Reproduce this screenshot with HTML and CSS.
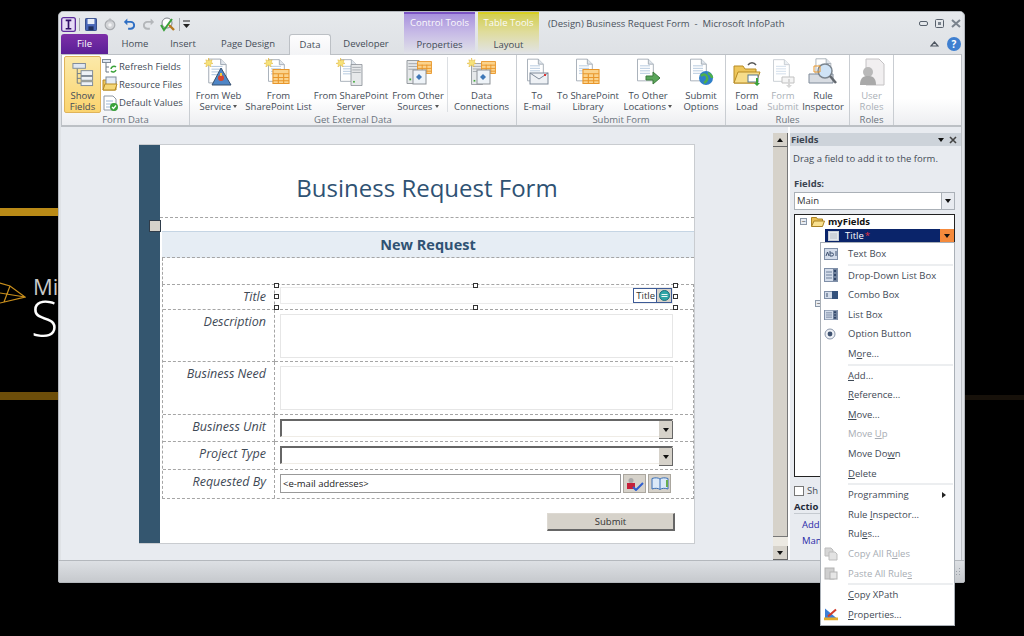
FILE: index.html
```html
<!DOCTYPE html>
<html lang="en">
<head>
<meta charset="utf-8">
<title>Microsoft InfoPath</title>
<link rel="stylesheet" href="styles.css">
</head>
<body>
<svg class="defs" width="0" height="0">
  <defs>
    <symbol id="doc" viewBox="0 0 24 28"><path d="M3 1h13l6 6v20H3z" fill="#fff" stroke="#9aa3ae"/><path d="M16 1v6h6" fill="#dfe5ec" stroke="#9aa3ae"/><path d="M6 9h12M6 12h12M6 15h12M6 18h12" stroke="#a9c0da"/></symbol>
    <symbol id="star" viewBox="0 0 10 10"><path d="M5 0l1 3 3-1-1 3 2 1-3 1 1 3-3-2-3 2 1-3-3-1 3-1-1-3 3 1z" fill="#f6e27a" stroke="#e0b030" stroke-width=".5"/></symbol>
    <symbol id="grid" viewBox="0 0 16 14"><path d="M.5.5h15v13H.5z" fill="#fbd38c" stroke="#e8962a"/><path d="M.5 4.500h15M.5 8h15M.5 11h15M5.500 4v10M10.500 4v10" stroke="#e8962a"/></symbol>
    <symbol id="server" viewBox="0 0 14 26"><path d="M.5.500h13v25H.5z" fill="#e6e8ea" stroke="#8d9298"/><path d="M2 4h10M2 7h10M2 10h10" stroke="#9ea3a9"/><rect x="3" y="20" width="2" height="2" fill="#41a83c"/></symbol>
    <symbol id="mini" viewBox="0 0 16 16"><path d="M2 1h9l3 3v11H2z" fill="#fff" stroke="#8e98a4"/><path d="M4 6h7M4 9h7M4 12h7" stroke="#9db6d4"/></symbol>
    <symbol id="menu-list" viewBox="0 0 14 14"><rect x=".5" y=".5" width="13" height="13" fill="#d3dcea" stroke="#7f8fa8"/><rect x="9" y="1" width="4" height="12" fill="#6f819c"/><path d="M10 3h2M10 7h2M10 11h2" stroke="#1f3558" stroke-width="1.500"/><path d="M2 4h6M2 7h6M2 10h6" stroke="#6f819c"/></symbol>
  </defs>
</svg>

<div class="desktop-art" aria-hidden="true">
  <div class="stripe stripe-top"></div>
  <div class="stripe stripe-bottom"></div>
  <div class="stripe stripe-right"></div>
  <svg class="art-mark" width="26" height="26" viewBox="0 0 26 26"><path d="M0 3l10 3 15 11L0 23M10 6L4 22M0 13l25 4" fill="none" stroke="#c98f1c" stroke-width="1.200"/></svg>
  <span class="art-mi">Mi</span>
  <span class="art-s">S</span>
</div>

<main class="window">
  <header class="top">
    <div class="qat">
      <svg class="q-app" width="15" height="15" viewBox="0 0 16 16"><rect x=".7" y=".7" width="14.600" height="14.600" rx="2" fill="#e6dcf5" stroke="#5d2c9c" stroke-width="1.400"/><path d="M5 3.500h6M5 12.500h6M8 3.500v9" stroke="#32106a" stroke-width="1.800"/></svg>
      <span class="qat-sep q-sep1"></span>
      <svg class="q-save" width="12" height="13" viewBox="0 0 14 14" preserveAspectRatio="none"><rect x=".5" y=".5" width="13" height="13" rx="1" fill="#4a68b8" stroke="#27407f"/><rect x="3" y="1" width="8" height="5.500" fill="#e8eef8"/><rect x="4" y="9" width="6" height="4" fill="#1f2f5c"/></svg>
      <svg class="q-pub" width="14" height="16" viewBox="0 0 16 16"><circle cx="8" cy="9" r="5.500" fill="#d3d5d8" stroke="#a8abaf" stroke-width="1.400"/><path d="M8 1l4 4H4z" fill="#b9bcc0"/><circle cx="8" cy="9" r="2" fill="#f2f3f4"/></svg>
      <svg class="q-undo" width="12" height="13" viewBox="0 0 14 14"><path d="M4 4h5a4 4 0 0 1 0 8H6" fill="none" stroke="#2f6fc4" stroke-width="2.200"/><path d="M5 0v8L1 4z" fill="#2f6fc4"/></svg>
      <svg class="q-redo" width="12" height="13" viewBox="0 0 14 14"><path d="M10 4H5a4 4 0 0 0 0 8h3" fill="none" stroke="#b4b7ba" stroke-width="2.200"/><path d="M9 0v8l4-4z" fill="#b4b7ba"/></svg>
      <svg class="q-check" width="16" height="16" viewBox="0 0 16 16"><circle cx="7" cy="7" r="5" fill="#fff" stroke="#7b8087"/><path d="M1 9l3 5 8-11" fill="none" stroke="#3aa23a" stroke-width="2"/><path d="M9 9l5 5" stroke="#b7791f" stroke-width="2.400"/></svg>
      <span class="qat-sep q-sep2"></span>
      <svg class="q-more" width="7" height="8" viewBox="0 0 7 8"><path d="M0 1h7" stroke="#222"/><path d="M0 4h7L3.500 8z" fill="#222"/></svg>
    </div>
    <div class="ctx ctx-control">
      <div class="ctx-title">Control Tools</div>
      <div class="ctx-tab">Properties</div>
    </div>
    <div class="ctx ctx-table">
      <div class="ctx-title">Table Tools</div>
      <div class="ctx-tab">Layout</div>
    </div>
    <div class="caption">
      <span class="caption-text">(Design) Business Request Form&nbsp; -&nbsp; Microsoft InfoPath</span>
      <span class="win-btns">
        <svg width="9" height="5" viewBox="0 0 9 5"><rect x=".5" y=".5" width="8" height="4" rx="1.500" fill="none" stroke="#58616c"/></svg>
        <svg width="9" height="9" viewBox="0 0 9 9"><rect x=".5" y=".5" width="8" height="8" rx="1" fill="none" stroke="#58616c"/><rect x="3" y="3" width="3" height="3" fill="#7a838d"/></svg>
        <svg width="10" height="9" viewBox="0 0 10 9"><path d="M1 1l8 7M9 1L1 8" stroke="#7a838d" stroke-width="2"/></svg>
      </span>
    </div>
    <nav class="tabs">
      <span class="tab tab-file">File</span>
      <span class="tab tab-home">Home</span>
      <span class="tab tab-insert">Insert</span>
      <span class="tab tab-design">Page Design</span>
      <span class="tab tab-active">Data</span>
      <span class="tab tab-dev">Developer</span>
    </nav>
    <div class="help-row">
      <svg width="9" height="6" viewBox="0 0 9 6"><path d="M1 5l3.500-4L8 5z" fill="none" stroke="#4d5560" stroke-width="1.200"/></svg>
      <span class="help">?</span>
    </div>
  </header>

  <section class="ribbon">
    <div class="group group-form">
      <div class="group-body">
        <div class="show-fields">
          <svg width="22" height="25" viewBox="0 0 22 25"><rect x=".5" y=".5" width="13" height="5" fill="#dfe7f2" stroke="#7e8a99"/><path d="M5 6v15M5 11h4M5 16h4M5 21h4" stroke="#6b7785" fill="none"/><rect x="9" y="8" width="12" height="5" fill="#eef2f7" stroke="#7e8a99"/><rect x="9" y="14" width="12" height="4" fill="#eef2f7" stroke="#7e8a99"/><rect x="9" y="19.500" width="12" height="4" fill="#eef2f7" stroke="#7e8a99"/></svg>
          <span class="btn-label">Show<br>Fields</span>
        </div>
        <div class="small-col">
          <div class="small-btn">
            <svg width="16" height="16" viewBox="0 0 16 16"><rect x=".5" y="1.500" width="8" height="3" fill="#dfe7f2" stroke="#7e8a99"/><path d="M4 5v9h3M4 9h3" fill="none" stroke="#6b7785"/><path d="M9 11a3 3 0 0 1 5-2M14 12a3 3 0 0 1-5 1" fill="none" stroke="#3aa23a" stroke-width="1.500"/></svg>
            <span>Refresh Fields</span>
          </div>
          <div class="small-btn">
            <svg width="16" height="16" viewBox="0 0 16 16"><path d="M1 4h6l1 1h6v9H1z" fill="#eec65b" stroke="#b78b24"/><rect x="4" y="1" width="10" height="8" fill="#e6edf6" stroke="#7e8a99"/><path d="M1 14l2-6h12l-2 6z" fill="#f5d777" stroke="#b78b24"/></svg>
            <span>Resource Files</span>
          </div>
          <div class="small-btn">
            <svg width="16" height="16"><use href="#mini"/><circle cx="12" cy="12" r="4" fill="#3aa23a"/><path d="M10 12l1.500 1.500L14 10.500" stroke="#fff" fill="none" stroke-width="1.200"/></svg>
            <span>Default Values</span>
          </div>
        </div>
      </div>
      <div class="group-label">Form Data</div>
    </div>

    <div class="group group-external">
      <div class="group-body">
        <div class="rb w-web">
          <svg class="rb-icon" width="30" height="30"><use href="#doc" x="2" width="22" height="26"/><use href="#star" x="0" y="0" width="9" height="9"/><path d="M17 10l10 17H8z" fill="#4f86c6" stroke="#37506f"/><circle cx="17" cy="20" r="3" fill="#d8452f"/><path d="M17 15v3" stroke="#f3c33c" stroke-width="2"/></svg>
          <span class="btn-label">From Web<br>Service <i class="caret"></i></span>
        </div>
        <div class="rb w-list">
          <svg class="rb-icon" width="30" height="30"><use href="#doc" x="2" width="20" height="25"/><use href="#star" x="0" y="0" width="9" height="9"/><use href="#grid" x="8" y="11" width="18" height="15"/></svg>
          <span class="btn-label">From<br>SharePoint List</span>
        </div>
        <div class="rb w-server">
          <svg class="rb-icon" width="30" height="30"><use href="#doc" x="2" width="20" height="25"/><use href="#star" x="0" y="0" width="9" height="9"/><use href="#server" x="14" y="6" width="13" height="22"/></svg>
          <span class="btn-label">From SharePoint<br>Server</span>
        </div>
        <div class="rb w-other">
          <svg class="rb-icon" width="30" height="30"><use href="#server" x="3" y="2" width="14" height="24"/><use href="#grid" x="14" y="3" width="15" height="13"/><rect x="10" y="12" width="13" height="14" fill="#eef3f8" stroke="#8d9298"/><path d="M13 19l3-3 3 3-3 3z" fill="#3f78b8"/></svg>
          <span class="btn-label">From Other<br>Sources <i class="caret"></i></span>
        </div>
        <i class="rb-sep"></i>
        <div class="rb w-conn">
          <svg class="rb-icon" width="30" height="30"><use href="#server" x="3" y="5" width="14" height="22"/><use href="#star" x="0" y="0" width="9" height="9"/><use href="#grid" x="14" y="3" width="15" height="13"/><rect x="10" y="12" width="13" height="14" fill="#eef3f8" stroke="#8d9298"/><path d="M13 19l3-3 3 3-3 3z" fill="#3f78b8"/></svg>
          <span class="btn-label">Data<br>Connections</span>
        </div>
      </div>
      <div class="group-label">Get External Data</div>
    </div>

    <div class="group group-submit">
      <div class="group-body">
        <div class="rb w-mail">
          <svg class="rb-icon" width="30" height="30"><use href="#doc" x="3" width="20" height="24"/><rect x="8" y="15" width="18" height="11" fill="#eef1f5" stroke="#7e8a99"/><path d="M8 15l9 6 9-6" fill="none" stroke="#7e8a99"/><rect x="22" y="16" width="2" height="2" fill="#d33"/></svg>
          <span class="btn-label">To<br>E-mail</span>
        </div>
        <div class="rb w-lib">
          <svg class="rb-icon" width="30" height="30"><use href="#doc" x="1" width="20" height="24"/><use href="#grid" x="9" y="11" width="18" height="15"/></svg>
          <span class="btn-label">To SharePoint<br>Library</span>
        </div>
        <div class="rb w-loc">
          <svg class="rb-icon" width="30" height="30"><use href="#doc" x="2" width="20" height="24"/><path d="M13 18h7v-4l7 6-7 6v-4h-7z" fill="#5aa65a" stroke="#3c7a3c"/></svg>
          <span class="btn-label">To Other<br>Locations <i class="caret"></i></span>
        </div>
        <div class="rb w-opt">
          <svg class="rb-icon" width="30" height="30"><use href="#doc" x="2" width="20" height="24"/><circle cx="20" cy="20" r="7" fill="#2f7fc9"/><path d="M15 18c3-3 5-1 6 1s-1 5-3 6M22 15c2 1 4 3 4 5" fill="none" stroke="#4fb04a" stroke-width="2.500"/></svg>
          <span class="btn-label">Submit<br>Options</span>
        </div>
      </div>
      <div class="group-label">Submit Form</div>
    </div>

    <div class="group group-rules">
      <div class="group-body">
        <div class="rb w-load">
          <svg class="rb-icon" width="30" height="30"><path d="M2 8h9l2 3h11v14H2z" fill="#eec65b" stroke="#b78b24"/><path d="M2 25l4-11h22l-4 11z" fill="#f7dd8a" stroke="#b78b24"/><path d="M16 7c2-3 6-3 8 0" fill="none" stroke="#555" stroke-width="1.400"/><rect x="16" y="17" width="10" height="7" fill="#fff" stroke="#56798f"/><path d="M24 20v5h-2l3 3 3-3h-2v-5z" fill="#3aa23a"/></svg>
          <span class="btn-label">Form<br>Load</span>
        </div>
        <div class="rb w-fsub disabled">
          <svg class="rb-icon dim" width="30" height="30"><use href="#doc" x="3" width="20" height="25"/><path d="M14 19h12v6H14z" fill="#eee" stroke="#999"/><path d="M20 21v6h-2l3 3 3-3h-2v-6z" fill="#bbb"/></svg>
          <span class="btn-label">Form<br>Submit</span>
        </div>
        <div class="rb w-insp">
          <svg class="rb-icon" width="30" height="30"><use href="#doc" x="5" width="20" height="22"/><path d="M1 16h24v9H1z" fill="#d8dce2" stroke="#7e8a99"/><circle cx="17" cy="13" r="7" fill="#cfe3f6" stroke="#7b858f" stroke-width="1.500"/><path d="M22 18l6 7" stroke="#62676d" stroke-width="2.500"/><path d="M6 8h6v6H6z" fill="none" stroke="#e8962a"/></svg>
          <span class="btn-label">Rule<br>Inspector</span>
        </div>
      </div>
      <div class="group-label">Rules</div>
    </div>

    <div class="group group-roles">
      <div class="group-body">
        <div class="rb w-roles disabled">
          <svg class="rb-icon" width="30" height="30"><path d="M9 1h13l5 5v21H9z" fill="#f1eff0" stroke="#c4c2c4"/><circle cx="11" cy="14" r="5" fill="#b9b9b9"/><path d="M3 27c0-8 4-9 8-9s8 1 8 9z" fill="#a9a9a9"/></svg>
          <span class="btn-label">User<br>Roles</span>
        </div>
      </div>
      <div class="group-label">Roles</div>
    </div>
  </section>

  <section class="workspace">
    <div class="canvas">
      <article class="form">
        <div class="form-strip"></div>
        <div class="form-page">
          <span class="table-handle"></span>
          <h1 class="form-title">Business Request Form</h1>
          <div class="form-gap"></div>
          <h2 class="banner">New Request</h2>
          <div class="banner-gap"></div>
          <div class="fields-table">
            <div class="cell label h-title">Title</div>
            <div class="cell value h-title">
              <div class="input-title">
                <span class="title-tag"><span class="tag-name">Title</span><span class="tag-btn"><svg width="11" height="11" viewBox="0 0 11 11"><circle cx="5.500" cy="5.500" r="5" fill="#2fa6a6" stroke="#1c6f80"/><path d="M2.500 4.500h6M2.500 6.500h6" stroke="#e8f6f6"/></svg></span></span>
              </div>
              <i class="sel s-tl"></i><i class="sel s-tc"></i><i class="sel s-tr"></i>
              <i class="sel s-ml"></i><i class="sel s-mr"></i>
              <i class="sel s-bl"></i><i class="sel s-bc"></i><i class="sel s-br"></i>
            </div>
            <div class="cell label h-area">Description</div>
            <div class="cell value h-area"><div class="area"></div></div>
            <div class="cell label h-area2">Business Need</div>
            <div class="cell value h-area2"><div class="area"></div></div>
            <div class="cell label h-drop">Business Unit</div>
            <div class="cell value h-drop"><div class="dropdown"><span class="drop-arrow"><i class="arrow"></i></span></div></div>
            <div class="cell label h-drop2">Project Type</div>
            <div class="cell value h-drop2"><div class="dropdown"><span class="drop-arrow"><i class="arrow"></i></span></div></div>
            <div class="cell label h-drop2">Requested By</div>
            <div class="cell value h-drop2 people">
              <div class="people-input">&lt;e-mail addresses&gt;</div>
              <span class="people-btn"><svg width="18" height="14" viewBox="0 0 18 14"><circle cx="5" cy="3.500" r="2.500" fill="#a8a8a8"/><rect x="1" y="6" width="8" height="6" fill="#c5203a"/><path d="M7 10l3 3 7-7" fill="none" stroke="#2f5fd0" stroke-width="2"/></svg></span>
              <span class="people-btn"><svg width="18" height="13" viewBox="0 0 18 13"><path d="M9 2C7 .5 4 .5 1 1.500V12c3-1 6-1 8 .5 2-1.500 5-1.500 8-.5V1.500C14 .5 11 .5 9 2z" fill="#dbe9f8" stroke="#3b6fb5"/><path d="M9 2v10" stroke="#3b6fb5"/><rect x="15" y="3" width="2" height="7" fill="#6aae4e"/></svg></span>
            </div>
          </div>
          <div class="submit-row"><span class="submit">Submit</span></div>
        </div>
      </article>
    </div>

    <div class="scrollbar">
      <span class="sb-btn"><i class="arrow up"></i></span>
      <span class="sb-thumb"></span>
      <span class="sb-track"></span>
      <span class="sb-btn"><i class="arrow"></i></span>
    </div>

    <aside class="pane">
      <div class="pane-head">
        <span>Fields</span>
        <span class="pane-ctrls"><i class="arrow"></i><svg width="8" height="8" viewBox="0 0 8 8"><path d="M1 1l6 6M7 1L1 7" stroke="#444" stroke-width="1.600"/></svg></span>
      </div>
      <p class="pane-hint">Drag a field to add it to the form.</p>
      <p class="pane-label">Fields:</p>
      <div class="pane-select"><span>Main</span><span class="ps-btn"><i class="arrow"></i></span></div>
      <div class="tree">
        <div class="tree-root">
          <span class="expander">−</span>
          <svg width="14" height="11" viewBox="0 0 14 11"><path d="M.5 1.500h5l1 1.500h5v7H.5z" fill="#e9bf52" stroke="#a98125"/><path d="M.5 10.500l2.500-5.500h10.500l-2 5.500z" fill="#f9e08f" stroke="#a98125"/></svg>
          <b>myFields</b>
        </div>
        <div class="tree-sel">
          <svg width="11" height="10" viewBox="0 0 11 10"><rect x=".5" y=".5" width="10" height="9" fill="#e4e8ee" stroke="#c8ced6"/><path d="M2 3h7M2 5h7M2 7h7" stroke="#b6bdc7"/></svg>
          <span class="ts-name">Title</span><span class="ts-star">*</span>
          <span class="ts-drop"><i class="arrow"></i></span>
        </div>
        <span class="expander tree-peek">−</span>
      </div>
      <div class="pane-check"><span class="box"></span><span>Sh</span></div>
      <div class="pane-actions">Actio</div>
      <a class="pane-link link-add">Add</a>
      <a class="pane-link">Man</a>
    </aside>
  </section>
  <footer class="status">
    <svg width="10" height="10" viewBox="0 0 10 10"><path d="M8 1h1v1H8zM8 4h1v1H8zM5 4h1v1H5zM8 7h1v1H8zM5 7h1v1H5zM2 7h1v1H2z" fill="#9aa0a7"/></svg>
  </footer>
</main>

<div class="menu">
  <div class="mi"><svg width="14" height="12" viewBox="0 0 14 12"><rect x=".5" y=".5" width="13" height="11" fill="#d3dcea" stroke="#7f8fa8"/><path d="M2 8l1.500-4 1.500 4M6 3v5h2a1.500 1.500 0 0 0 0-3H6M12 3v5" fill="none" stroke="#3f5270"/></svg><span>Text Box</span></div>
  <div class="ms"></div>
  <div class="mi"><svg width="14" height="14"><use href="#menu-list"/></svg><span>Drop-Down List Box</span></div>
  <div class="mi"><svg width="14" height="8" viewBox="0 0 14 8"><rect x=".5" y=".5" width="13" height="7" fill="#d3dcea" stroke="#7f8fa8"/><rect x="8" y="0" width="6" height="8" fill="#33517c"/><path d="M3 2v4" stroke="#3f5270"/></svg><span>Combo Box</span></div>
  <div class="mi"><svg width="14" height="10" viewBox="0 0 14 14" preserveAspectRatio="none"><use href="#menu-list"/></svg><span>List Box</span></div>
  <div class="mi"><svg width="12" height="12" viewBox="0 0 12 12"><circle cx="6" cy="6" r="5" fill="#eef1f6" stroke="#8b97ab"/><circle cx="6" cy="6" r="2.400" fill="#3f5270"/></svg><span>Option Button</span></div>
  <div class="mi"><span>M<u>o</u>re...</span></div>
  <div class="ms"></div>
  <div class="mi"><span><u>A</u>dd...</span></div>
  <div class="mi"><span><u>R</u>eference...</span></div>
  <div class="mi"><span><u>M</u>ove...</span></div>
  <div class="mi off"><span>Move <u>U</u>p</span></div>
  <div class="mi"><span>Move Do<u>w</u>n</span></div>
  <div class="mi"><span><u>D</u>elete</span></div>
  <div class="ms"></div>
  <div class="mi"><span>Pro<u>g</u>ramming</span><i class="sub"></i></div>
  <div class="mi"><span>Rule <u>I</u>nspector...</span></div>
  <div class="mi"><span>Rul<u>e</u>s...</span></div>
  <div class="mi off"><svg width="14" height="14" viewBox="0 0 14 14"><path d="M1 1h6l2 2v6H1z" fill="#d6d6d6" stroke="#bdbdbd"/><path d="M5 5h6l2 2v6H5z" fill="#e3e3e3" stroke="#bdbdbd"/></svg><span>Copy All R<u>u</u>les</span></div>
  <div class="mi off"><svg width="14" height="14" viewBox="0 0 14 14"><rect x="1" y="2" width="9" height="11" fill="#cfcfcf" stroke="#b3b3b3"/><rect x="6" y="6" width="7" height="7" fill="#e6e6e6" stroke="#b3b3b3"/></svg><span>Paste All Rule<u>s</u></span></div>
  <div class="ms"></div>
  <div class="mi"><span><u>C</u>opy XPath</span></div>
  <div class="mi"><svg width="14" height="13" viewBox="0 0 14 13"><path d="M1 1v10h12L1 1z" fill="#3d7fd8"/><path d="M4 9l8-7" stroke="#d23b2a" stroke-width="2"/><rect x="0" y="10" width="14" height="3" fill="#e3ad2c"/></svg><span><u>P</u>roperties...</span></div>
</div>
</body>
</html>
```

FILE: styles.css
```css
* { box-sizing: border-box; }
html, body { margin: 0; height: 100%; }
body {
  position: relative;
  width: 1024px;
  height: 636px;
  overflow: hidden;
  background: #000;
  font-family: "Open Sans", "Noto Sans", sans-serif;
  font-size: 9px;
  color: #444c57;
}
.defs { position: absolute; }
p, h1, h2 { margin: 0; }

/* desktop wallpaper behind the window */
.desktop-art { position: absolute; inset: 0; }
.stripe { position: absolute; }
.stripe-top { left: 0; top: 208px; width: 58px; height: 8px; background: #b98a17; }
.stripe-bottom { left: 0; top: 392px; width: 58px; height: 8px; background: #6d4e0a; }
.stripe-right { left: 965px; top: 395px; width: 59px; height: 5px; background: #17110a; }
.art-mark { position: absolute; left: 0; top: 280px; }
.art-mi { position: absolute; left: 33px; top: 276px; font: 22px/20px "Open Sans", sans-serif; color: #c9c9c9; }
.art-s { position: absolute; left: 31px; top: 300px; font: 300 50px/36px "Open Sans", sans-serif; color: #fff; }

/* window */
.window {
  position: absolute;
  left: 58px;
  top: 11px;
  width: 907px;
  height: 572px;
  display: flex;
  flex-direction: column;
  padding: 0 2px;
  border-radius: 5px 5px 2px 2px;
  background: #dfe2e6;
  border: 1px solid #b4b8bd;
}

.top {
  display: grid;
  grid-template-columns: 343px 71px 3px 61px 1fr;
  grid-template-rows: 22px 20px;
  background: linear-gradient(#e6e9ec, #dee1e5);
}
.qat { grid-column: 1; grid-row: 1; display: flex; align-items: center; padding: 2px 0 0 0; }
.q-sep1 { margin-left: 3px; }
.q-save { margin-left: 5px; }
.q-pub { margin-left: 6px; }
.q-undo { margin-left: 6px; }
.q-redo { margin-left: 8px; }
.q-check { margin-left: 5px; }
.q-sep2 { margin-left: 3px; }
.q-more { margin-left: 3px; }
.qat-sep { width: 1px; height: 13px; background: #a7abb0; }
.ctx { grid-row: 1 / 3; display: flex; flex-direction: column; border-top: 2px solid; text-align: center; }
.ctx-control { grid-column: 2; border-color: #7b54c4; background: linear-gradient(#a892de, #c6b9e6 45%, #e1e3e8); }
.ctx-table { grid-column: 4; border-color: #d8cf22; background: linear-gradient(#d3cf4e, #dfdc9c 45%, #e1e3e8); }
.ctx-title { height: 20px; line-height: 18px; font-size: 9.5px; color: #fbfbfb; }
.ctx-tab { height: 20px; line-height: 21px; font-size: 9.5px; color: #444c57; }
.caption { grid-column: 5; grid-row: 1; display: flex; align-items: center; justify-content: space-between; padding: 1px 1px 0 9px; }
.caption-text { font-size: 9.5px; color: #4a525d; }
.win-btns { display: flex; align-items: center; gap: 7px; }
.tabs { grid-column: 1; grid-row: 2; display: flex; align-items: flex-end; }
.tab { height: 20px; line-height: 20px; text-align: center; font-size: 9.5px; color: #444c57; }
.tab-file { width: 47px; border-radius: 3px 3px 0 0; background: linear-gradient(#7d2fa8, #5a1f96); color: #fff; }
.tab-home { width: 52px; margin-left: 1px; }
.tab-insert { width: 44px; }
.tab-design { width: 80px; margin-left: 3px; }
.tab-active { width: 42px; margin-left: 1px; height: 21px; margin-bottom: -1px; border: 1px solid #bcc0c5; border-bottom: 0; border-radius: 3px 3px 0 0; background: linear-gradient(#fdfdfe, #f3f4f6); position: relative; z-index: 1; }
.tab-dev { width: 70px; }
.help-row { grid-column: 5; grid-row: 2; display: flex; align-items: center; justify-content: flex-end; gap: 8px; padding: 0 1px 0 0; }
.help { width: 14px; height: 14px; border-radius: 50%; background: #3f7fd0; color: #fff; font: bold 10px/14px "Open Sans", sans-serif; text-align: center; }

/* ribbon */
.ribbon {
  display: flex;
  height: 73px;
  border: 1px solid #bcc0c5;
  border-width: 1px 1px 2px 1px;
  background: linear-gradient(#fff, #fff 62%, #edeef1);
}
.group { display: flex; flex-direction: column; border-right: 1px solid #c9cdd2; }
.group-body { flex: 1; display: flex; min-height: 0; }
.group-label { height: 13px; line-height: 15px; text-align: center; font-size: 9.5px; color: #6b737d; }
.group-form { width: 128px; }
.group-external { width: 327px; }
.group-submit { width: 209px; }
.group-rules { width: 124px; }
.group-roles { width: 44px; }
.group-form .group-body { padding: 1px 0 0 2px; }
.show-fields {
  width: 37px;
  height: 57px;
  display: flex;
  flex-direction: column;
  align-items: center;
  padding-top: 6px;
  border: 1px solid #e0b45a;
  border-radius: 2px;
  background: linear-gradient(#fbe9a9, #fbd46f);
}
.show-fields .btn-label { margin-top: 3px; }
.small-col { display: flex; flex-direction: column; margin-left: 1px; padding-top: 1px; }
.small-btn { display: flex; align-items: center; gap: 1px; height: 19px; font-size: 9.5px; color: #444c57; white-space: nowrap; }
.rb { display: flex; flex-direction: column; align-items: center; padding-top: 3px; flex: none; }
.rb-icon { flex: none; }
.dim { opacity: .6; }
.btn-label { display: block; margin-top: 2px; font-size: 9.5px; line-height: 11px; text-align: center; color: #444c57; white-space: nowrap; }
.disabled .btn-label { color: #aab0b7; }
.caret { display: inline-block; border: 2px solid transparent; border-top: 3px solid #555; border-bottom: 0; vertical-align: 2px; }
.rb-sep { width: 1px; margin: 2px 0 0; background: #dcdfe3; flex: none; }
.group-external .group-body { padding-left: 3px; }
.w-web { width: 51px; }
.w-list { width: 69px; }
.w-server { width: 76px; }
.w-other { width: 58px; }
.w-conn { width: 67px; }
.w-mail { width: 40px; }
.w-lib { width: 62px; }
.w-loc { width: 58px; }
.w-opt { width: 48px; }
.w-load { width: 40px; }
.w-fsub { width: 32px; }
.w-insp { width: 48px; }
.w-roles { width: 43px; }
.group-rules .group-body { padding-left: 1px; }

/* workspace */
.workspace { flex: 1; min-height: 0; display: flex; background: #e8ebf0; }
.canvas { width: 712px; flex: none; padding: 17px 0 0 78px; }
.form {
  display: flex;
  width: 556px;
  height: 400px;
  border: 1px solid #c9ccd0;
  border-left: 0;
  background: #fff;
}
.form-strip { width: 21px; background: #34566f; flex: none; }
.form-page { position: relative; flex: 1; min-width: 0; display: flex; flex-direction: column; }
.table-handle {
  position: absolute;
  left: -11px;
  top: 75px;
  width: 12px;
  height: 12px;
  background: #d6d2ca;
  border: 1px solid #2f3c4a;
}
.form-title {
  height: 73px;
  padding-top: 25px;
  text-align: center;
  font: 400 24px/36px "Open Sans", sans-serif;
  color: #2f5273;
  border-bottom: 1px dashed #a5a5a5;
}
.form-gap { height: 13px; }
.banner {
  height: 27px;
  margin: 0 0 0 2px;
  text-align: center;
  font: 700 14.5px/26px "Open Sans", sans-serif;
  color: #2f5273;
  background: #e6edf4;
  border-top: 1px solid #c5d5e4;
  border-bottom: 1px dashed #a5a5a5;
}
.banner-gap { height: 26px; margin-left: 2px; border-left: 1px dashed #a5a5a5; }
.fields-table {
  display: grid;
  grid-template-columns: 112px 1fr;
  margin: 0 0 0 2px;
  border: 1px dashed #a5a5a5;
}
.cell { border-bottom: 1px dashed #a5a5a5; }
.cell:nth-last-child(-n+2) { border-bottom: 0; }
.label {
  padding: 4px 8px 0 0;
  text-align: right;
  font: italic 12.5px/16px "Open Sans", sans-serif;
  color: #3f4a56;
  border-right: 1px dashed #a5a5a5;
}
.value { position: relative; padding: 2px 20px 0 5px; }
.h-title { height: 25px; }
.h-area { height: 52px; }
.h-area2 { height: 53px; }
.h-drop { height: 27px; }
.h-drop2 { height: 28px; }
.input-title { height: 17px; position: relative; border: 1px solid #ebebeb; }
.title-tag {
  position: absolute;
  right: 0;
  top: 0;
  height: 15px;
  display: flex;
  border: 1px solid #3c5a96;
  background: #fff;
  font-size: 9.5px;
  line-height: 13px;
  color: #333;
}
.tag-name { padding: 0 1px 0 2px; border-right: 1px solid #3c5a96; }
.tag-btn { width: 14px; background: #d6d2ca; display: flex; align-items: center; justify-content: center; }
.sel { position: absolute; width: 5px; height: 5px; background: #fff; border: 1px solid #333; }
.s-tl, .s-ml, .s-bl { left: -1px; }
.s-tc, .s-bc { left: 198px; }
.s-tr, .s-mr, .s-br { left: 398px; }
.s-tl, .s-tc, .s-tr { top: -2px; }
.s-ml, .s-mr { top: 9px; }
.s-bl, .s-bc, .s-br { top: 20px; }
.area { height: 44px; margin-top: 2px; border: 1px solid #e6e6e6; }
.dropdown {
  height: 18px;
  position: relative;
  margin-top: 2px;
  border: 1px solid #efece6;
  border-width: 0 1px 1px 0;
  border-top: 2px solid #666;
  border-left: 2px solid #666;
}
.drop-arrow {
  position: absolute;
  right: -1px;
  top: -2px;
  width: 14px;
  height: 18px;
  margin: 2px 0 0;
  background: #d6d2ca;
  border-right: 1px solid #666;
  border-bottom: 1px solid #666;
  display: flex;
  align-items: center;
  justify-content: center;
}
.arrow { display: block; width: 0; height: 0; border: 3.500px solid transparent; border-top: 4px solid #111; border-bottom: 0; }
.arrow.up { border-top: 0; border-bottom: 4px solid #111; }
.people { display: flex; gap: 2px; align-items: flex-start; padding-right: 0; }
.people-input {
  width: 341px;
  height: 19px;
  margin-top: 2px;
  border: 1px solid #999;
  font: 9.5px/17px "Open Sans", sans-serif;
  padding-left: 2px;
  color: #222;
}
.people-btn {
  width: 23px;
  height: 19px;
  margin-top: 2px;
  background: #d6d2ca;
  border: 1px solid #aaa69e;
  display: flex;
  align-items: center;
  justify-content: center;
}
.submit-row { display: flex; justify-content: flex-end; padding: 14px 19px 0 0; }
.submit {
  width: 128px;
  height: 18px;
  text-align: center;
  font: 9.5px/16px "Open Sans", sans-serif;
  color: #333;
  background: #d6d2ca;
  border: 1px solid #ddd9d2;
  border-right: 2px solid #666;
  border-bottom: 2px solid #666;
}

/* scrollbar */
.scrollbar { width: 15px; flex: none; margin-top: 6px; display: flex; flex-direction: column; }
.sb-btn { height: 14px; flex: none; background: #d6d2ca; border-right: 1px solid #666; border-bottom: 1px solid #666; display: flex; align-items: center; justify-content: center; }
.sb-thumb { flex: 1; background: #d6d2ca; border-right: 1px solid #777; border-bottom: 1px solid #777; }
.sb-track { height: 9px; flex: none; background: #ece9e2; }

/* task pane */
.pane { flex: 1; min-width: 0; position: relative; padding: 6px 0 0 0; border-right: 1px solid #bcc0c5; border-left: 2px solid #fff; background: #e8ebf0; }
.pane-head {
  height: 13px;
  display: flex;
  align-items: center;
  justify-content: space-between;
  padding: 0 4px 0 1px;
  background: #cdd3da;
  font: 700 9.5px/13px "Open Sans", sans-serif;
  color: #3a4450;
}
.pane-ctrls { display: flex; align-items: center; gap: 5px; }
.pane-hint { margin: 6px 0 0 3px; font-size: 9.5px; line-height: 14px; }
.pane-label { margin: 11px 0 0 4px; font: 700 9.5px/14px "Open Sans", sans-serif; color: #3a4450; }
.pane-select {
  display: flex;
  justify-content: space-between;
  height: 18px;
  margin: 1px 6px 0 4px;
  padding-left: 2px;
  line-height: 16px;
  background: #fff;
  border: 1px solid #aab0b7;
  font-size: 9.5px;
  color: #333;
}
.ps-btn { width: 13px; background: #e8ebf0; border-left: 1px solid #aab0b7; display: flex; align-items: center; justify-content: center; }
.tree {
  position: relative;
  height: 263px;
  margin: 4px 6px 0 4px;
  background: #fff;
  border: 1px solid #222;
}
.tree-root { display: flex; align-items: center; gap: 3px; height: 13px; padding-left: 5px; font-size: 9.5px; color: #111; }
.expander { width: 7px; height: 7px; font: 7px/6px sans-serif; text-align: center; border: 1px solid #8a97a8; background: #e8ecf2; color: #333; margin-right: 1px; }
.tree-sel {
  position: absolute;
  left: 30px;
  right: 0;
  top: 14px;
  height: 13px;
  display: flex;
  align-items: center;
  padding-left: 3px;
  background: #0a246a;
  color: #fff;
  font-size: 9.5px;
}
.ts-name { margin-left: 6px; }
.ts-star { color: #e03040; margin-left: 1px; }
.ts-drop { position: absolute; right: 0; top: 0; width: 14px; height: 13px; background: #f58a3c; display: flex; align-items: center; justify-content: center; }
.tree-peek { position: absolute; left: 20px; top: 85px; }
.pane-check { display: flex; align-items: center; gap: 3px; margin: 7px 0 0 4px; font-size: 9.5px; line-height: 14px; }
.box { width: 10px; height: 10px; background: #fff; border: 1px solid #777; }
.pane-actions { margin: 2px 8px 0 4px; font: 700 9.5px/13px "Open Sans", sans-serif; color: #1f2a3a; border-bottom: 1px solid #c5cad0; }
.pane-link { display: block; margin: 3px 0 0 12px; font-size: 9.5px; line-height: 13px; color: #2a2aa8; }
.link-add { margin-top: 4px; }

.status {
  height: 22px;
  flex: none;
  margin: 0 -2px;
  display: flex;
  align-items: center;
  justify-content: flex-end;
  padding-right: 3px;
  border-top: 1px solid #b4b8bd;
  background: linear-gradient(#dde0e4, #c6c9cd);
}

/* context menu */
.menu {
  position: absolute;
  left: 820px;
  top: 242px;
  width: 135px;
  height: 384px;
  padding: 1px;
  background: #fff;
  border: 1px solid #aab0b7;
}
.mi {
  position: relative;
  height: 19.600px;
  padding-left: 26px;
  font-size: 9.5px;
  line-height: 19px;
  color: #3f4a56;
  white-space: nowrap;
}
.mi svg { position: absolute; left: 2px; top: 50%; transform: translateY(-50%); }
.mi.off { color: #a8adb4; }
.ms { height: 2px; margin-left: 26px; background: #eceef0; }
.sub { position: absolute; right: 7px; top: 7px; border: 3px solid transparent; border-left: 4px solid #222; border-right: 0; }
```
